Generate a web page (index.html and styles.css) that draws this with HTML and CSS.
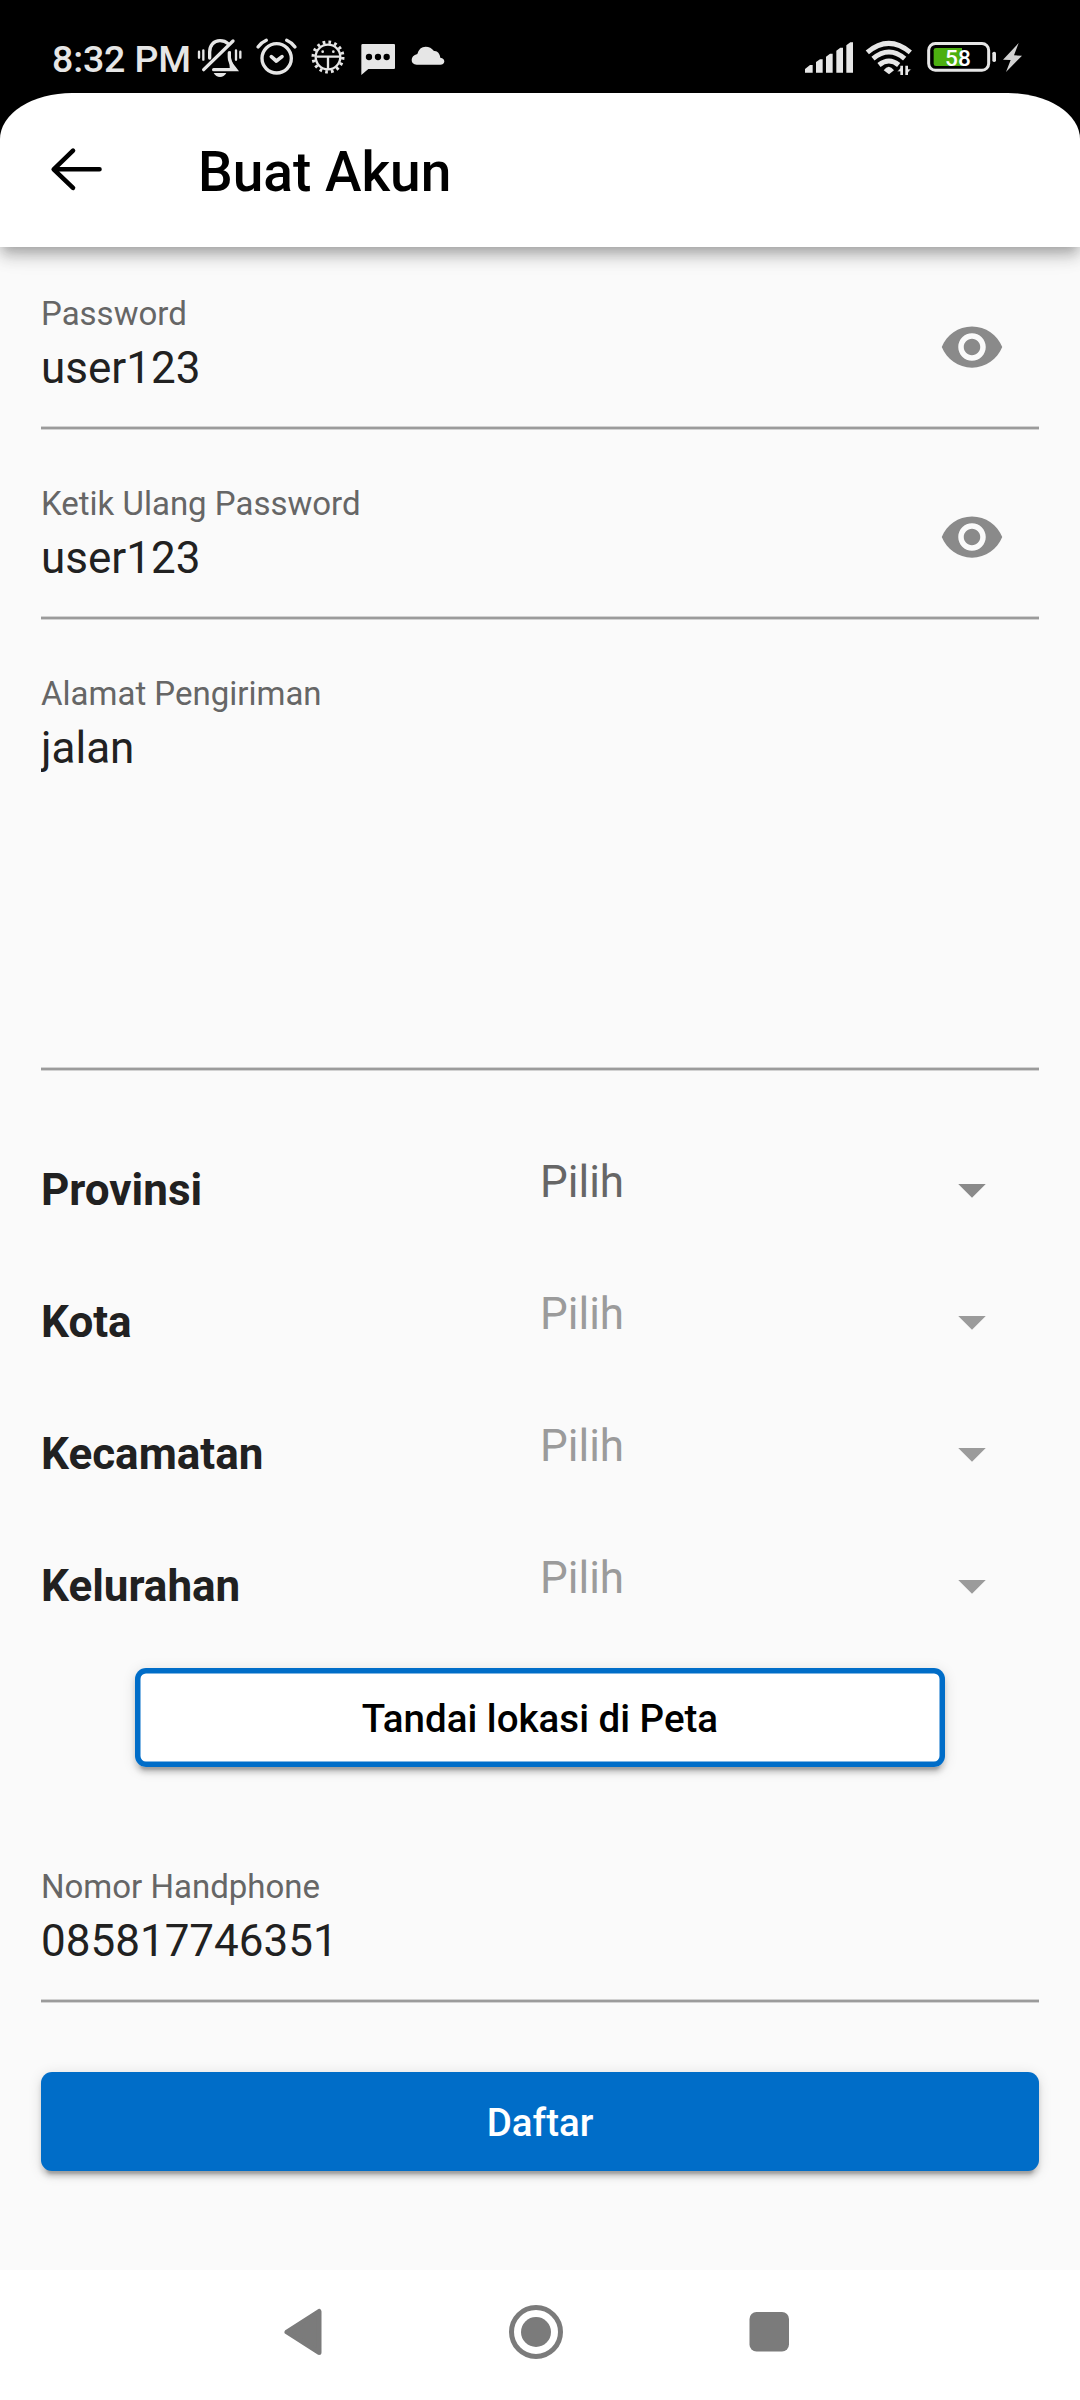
FILE: index.html
```html
<!DOCTYPE html>
<html lang="id">
<head>
<meta charset="utf-8">
<title>Buat Akun</title>
<link rel="stylesheet" href="styles.css">
</head>
<body>
<div class="screen">
  <div class="top">
    <div class="statusbar">
      <span class="time">8:32 PM</span>
      <svg width="60" height="93" viewBox="576 0 180 279" fill="none" stroke="#e6e6e6" stroke-width="10" stroke-linecap="round">
        <path d="M597 155v18M610 151v28M708 151v28M721 155v18" stroke-width="7"/>
        <path d="M629 174v-18c0-20 12-34 31-34 10 0 18 3 24 9M611 209l88-86"/>
        <path d="M688 158v14c0 12 6 21 13 29l6 8h-66" />
        <path d="M693 153v20c0 12 6 20 14 30l3 9h-20l-2-22-1-30z" fill="#e6e6e6" stroke="none"/>
        <path d="M641 219h38q-7 12-19 12t-19-12z" fill="#e6e6e6" stroke="none"/>
      </svg>
      <svg width="54" height="93" viewBox="756 0 162 279" fill="none" stroke="#e6e6e6" stroke-width="10" stroke-linecap="round" stroke-linejoin="round">
        <circle cx="830" cy="175" r="44"/>
        <path d="M774 141q9-13 25-20M885 141q-9-13-25-20"/>
        <path d="M814 170l15 13 17-13" stroke-width="11"/>
      </svg>
      <svg width="48" height="93" viewBox="918 0 144 279" fill="none" stroke="#e6e6e6">
        <circle cx="984" cy="171" r="37" stroke-width="7"/>
        <circle cx="984" cy="171" r="44.5" stroke-width="10" stroke-dasharray="8 9.476"/>
        <path d="M949 170h70M984 172v38" stroke-width="7"/>
        <circle cx="968" cy="155" r="4" fill="#e6e6e6" stroke="none"/><circle cx="1000" cy="155" r="4" fill="#e6e6e6" stroke="none"/>
      </svg>
      <svg width="50" height="93" viewBox="1062 0 150 279">
        <path d="M1088 132h94q3 0 3 3v69q0 3-3 3h-77l-21 18v-89q0-4 4-4z" fill="#e6e6e6"/>
        <circle cx="1107" cy="171" r="9.500"/><circle cx="1134" cy="171" r="9.500"/><circle cx="1160" cy="171" r="9.500"/>
      </svg>
      <svg width="50" height="93" viewBox="1212 0 150 279">
        <path d="M1250 194q-15-1-15-14 0-13 17-18 6-22 25-22 15 0 25 13 15-2 19 20 12 2 12 12-2 9-12 9z" fill="#e6e6e6"/>
      </svg>
      <span class="spacer"></span>
      <svg width="60" height="93" viewBox="120 0 180 279" fill="#e6e6e6">
        <path d="M135 218v-11l15-12h8v23zM168 218v-32l12-8h8v40zM198 218v-48l12-9h8v57zM229 218v-66l12-9h8v75zM259 218v-82l12-9h8v91z"/>
      </svg>
      <svg width="60" height="93" viewBox="300 0 180 279" fill="none" stroke="#e6e6e6" stroke-width="15">
        <path d="M322 157q64-54 129 0M339 176q48-40 95 0M357 195q30-24 59 0"/>
        <path d="M371 211q15-22 31 0l-15 12z" fill="#e6e6e6" stroke="none"/>
        <path d="M427 225v-28l-16 18h16M438 197v28l16-18h-16" fill="#e6e6e6" stroke="#000" stroke-width="2"/>
        <path d="M425 197v28M440 197v28" stroke-width="8"/>
      </svg>
      <svg class="battery" width="110" height="93" viewBox="480 0 330 279">
        <rect x="506" y="130.500" width="180" height="80" rx="20" fill="none" stroke="#e6e6e6" stroke-width="9"/>
        <path d="M528 144h78v54h-78q-7 0-7-7v-40q0-7 7-7z" fill="#4caf10"/>
        <rect x="697" y="155" width="11" height="31" rx="5" fill="#e6e6e6"/>
        <path d="M776 129l-47 50 23 1-14 36 48-49-24-1z" fill="#d2d2d2"/>
        <text x="594" y="198" text-anchor="middle">58</text>
      </svg>
    </div>
    <header class="appbar">
      <svg class="back" width="54" height="46" viewBox="0 0 54 46" fill="none" stroke="#000" stroke-width="4.600" stroke-linecap="round" stroke-linejoin="round">
        <path d="M24 3.700L4.700 22.300l19.300 18.500M5.500 22.300h45"/>
      </svg>
      <h1>Buat Akun</h1>
    </header>
  </div>

  <main class="form">
    <section class="field">
      <div class="text"><label>Password</label><div class="value">user123</div></div>
      <svg class="eye" width="66" height="66" viewBox="0 0 24 24"><path d="M12 4.500C7 4.500 2.730 7.610 1 12c1.730 4.390 6 7.500 11 7.500s9.270-3.110 11-7.500c-1.730-4.390-6-7.500-11-7.500zM12 17c-2.760 0-5-2.240-5-5s2.240-5 5-5 5 2.240 5 5-2.240 5-5 5zm0-8c-1.660 0-3 1.340-3 3s1.340 3 3 3 3-1.340 3-3-1.340-3-3-3z"/></svg>
    </section>
    <section class="field">
      <div class="text"><label>Ketik Ulang Password</label><div class="value">user123</div></div>
      <svg class="eye" width="66" height="66" viewBox="0 0 24 24"><path d="M12 4.500C7 4.500 2.730 7.610 1 12c1.730 4.390 6 7.500 11 7.500s9.270-3.110 11-7.500c-1.730-4.390-6-7.500-11-7.500zM12 17c-2.760 0-5-2.240-5-5s2.240-5 5-5 5 2.240 5 5-2.240 5-5 5zm0-8c-1.660 0-3 1.340-3 3s1.340 3 3 3 3-1.340 3-3-1.340-3-3-3z"/></svg>
    </section>
    <section class="field address">
      <div class="text"><label>Alamat Pengiriman</label><div class="value">jalan</div></div>
    </section>

    <div class="regions">
      <div class="region"><b>Provinsi</b><div class="select"><span>Pilih</span><svg width="28" height="14" viewBox="0 0 28 14"><path d="M0.250 0h27.500L14 13.750z"/></svg></div></div>
      <div class="region"><b>Kota</b><div class="select disabled"><span>Pilih</span><svg width="28" height="14" viewBox="0 0 28 14"><path d="M0.250 0h27.500L14 13.750z"/></svg></div></div>
      <div class="region"><b>Kecamatan</b><div class="select disabled"><span>Pilih</span><svg width="28" height="14" viewBox="0 0 28 14"><path d="M0.250 0h27.500L14 13.750z"/></svg></div></div>
      <div class="region"><b>Kelurahan</b><div class="select disabled"><span>Pilih</span><svg width="28" height="14" viewBox="0 0 28 14"><path d="M0.250 0h27.500L14 13.750z"/></svg></div></div>
    </div>

    <button class="btn outline">Tandai lokasi di Peta</button>

    <section class="field phone">
      <div class="text"><label>Nomor Handphone</label><div class="value">085817746351</div></div>
    </section>

    <button class="btn primary">Daftar</button>
  </main>

  <nav class="navbar">
    <svg width="1080" height="130" viewBox="0 0 1080 130" fill="#7b7b7b">
      <path d="M287 62L319 41.500V82.500L287 62z" stroke="#7b7b7b" stroke-width="5" stroke-linejoin="round"/>
      <circle cx="536" cy="62" r="24.500" fill="none" stroke="#7b7b7b" stroke-width="5"/>
      <circle cx="536" cy="62" r="15"/>
      <rect x="749.500" y="42" width="39.500" height="39.500" rx="7"/>
    </svg>
  </nav>
</div>
</body>
</html>
```
FILE: styles.css
```css
* { box-sizing: border-box; }
body { margin: 0; font-family: Roboto, "Noto Sans", sans-serif; background: #fafafa; }
svg { display: block; flex: none; }
.screen { width: 1080px; height: 2400px; display: flex; flex-direction: column; background: #fafafa; overflow: hidden; }

.top { background: #000; box-shadow: 0 5.5px 11px -2.75px rgba(0,0,0,.2), 0 11px 13.75px rgba(0,0,0,.14), 0 2.75px 27.5px rgba(0,0,0,.12); flex: none; }
.statusbar { height: 93px; display: flex; align-items: flex-start; padding-left: 52px; padding-right: 50px; }
.time { width: 140px; padding-top: 37px; font-size: 37.5px; line-height: 44px; font-weight: 500; letter-spacing: -.15px; color: #e6e6e6; white-space: nowrap; }
.spacer { flex: 1; }
.battery text { font: 500 68px Roboto, sans-serif; fill: #fff; }

.appbar { height: 154px; background: #fff; border-radius: 72px 72px 0 0 / 46px 46px 0 0; display: flex; align-items: center; padding-left: 49px; gap: 95px; }
.appbar h1 { margin: 4px 0 0; font-size: 55px; line-height: 64px; font-weight: 500; color: #000; }

.form { flex: 1; display: flex; flex-direction: column; padding: 48px 41px 0; }
.field { flex: none; height: 135px; margin-bottom: 55px; display: flex; justify-content: space-between; background: linear-gradient(#d2d2d2 0 1px, #9b9b9b 1px 3px, #d2d2d2 3px) bottom / 100% 4px no-repeat; }
.field label { display: block; font-size: 33px; line-height: 38px; color: #666; margin-bottom: 9px; }
.value { font-size: 44px; line-height: 52px; color: #212121; overflow: hidden; }
.eye { margin: 19px 34px 0 0; fill: #8a8a8a; }
.address { height: 396px; margin-bottom: 53px; }

.region { height: 132px; display: grid; grid-template-columns: 1fr 1fr; align-items: center; }
.region b { font-size: 44px; line-height: 52px; font-weight: 700; color: #212121; }
.select { display: flex; align-items: center; justify-content: space-between; padding-right: 53px; color: #666; }
.select span { font-size: 44px; line-height: 52px; padding-bottom: 16px; }
.select svg { fill: #8a8a8a; margin-top: 2px; }
.select.disabled { color: #9b9b9b; }
.select.disabled svg { fill: #9b9b9b; }

.btn { flex: none; height: 99px; border: 0; border-radius: 11px; padding: 2px 0 0; font: 500 38.5px/46px Roboto, sans-serif; box-shadow: 0 8.25px 2.75px -5.5px rgba(0,0,0,.2), 0 5.5px 5.5px rgba(0,0,0,.14), 0 2.75px 13.75px rgba(0,0,0,.12); }
.outline { width: 810px; align-self: center; margin: 16px 0 101px; background: #fff; color: #000; box-shadow: inset 0 0 0 5.5px #006dc8, 0 8.25px 2.75px -5.5px rgba(0,0,0,.2), 0 5.5px 5.5px rgba(0,0,0,.14), 0 2.75px 13.75px rgba(0,0,0,.12); }
.phone { margin-bottom: 69px; }
.primary { background: #006dc8; color: #fff; }

.navbar { flex: none; height: 130px; background: #fff; }
```
